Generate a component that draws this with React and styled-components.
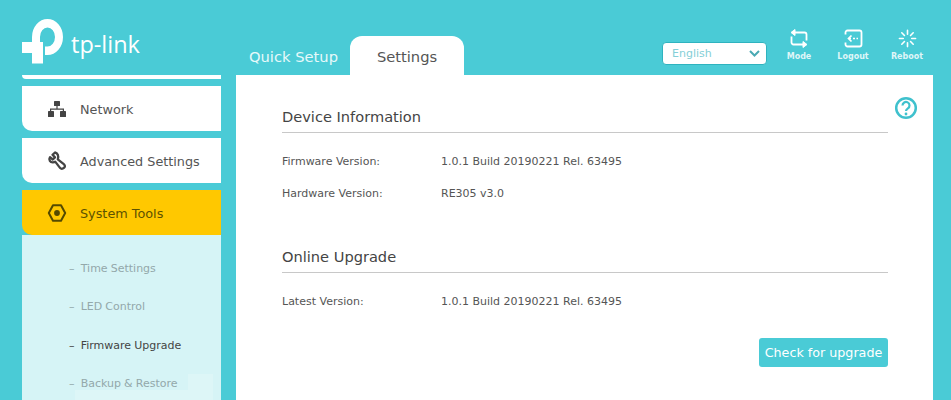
import React from "react";
import styled, { createGlobalStyle } from "styled-components";

const GlobalStyle = createGlobalStyle`
  html, body {
    margin: 0;
    padding: 0;
    height: 400px;
    overflow: hidden;
    background: #4acbd6;
    font-family: "DejaVu Sans", Verdana, sans-serif;
  }
`;

const Page = styled.div`
  width: 951px;
  height: 400px;
  overflow: hidden;
  background: #4acbd6;
`;

const Header = styled.header`
  height: 75px;
  display: flex;
  align-items: flex-end;
  padding-left: 22px;
  box-sizing: border-box;
`;

const Logo = styled.div`
  width: 214px;
  flex: none;
  height: 75px;
  display: flex;
  align-items: flex-start;
  padding-top: 19px;
  box-sizing: border-box;
  svg {
    flex: none;
  }
`;

const LogoText = styled.span`
  font-family: "Open Sans", sans-serif;
  font-size: 23.5px;
  font-weight: 400;
  line-height: 30px;
  margin: 10px 0 0 8px;
  color: #fff;
`;

const Tabs = styled.nav`
  display: flex;
  flex: none;
  align-items: flex-end;
  height: 39px;
  width: 401px;
  padding-left: 13px;
  box-sizing: border-box;
`;

const Tab = styled.div`
  height: 39px;
  box-sizing: border-box;
  font-size: 14.7px;
  line-height: 41px;
  width: ${(p) => p.$width}px;
  text-align: ${(p) => (p.$active ? "center" : "left")};
  color: ${(p) => (p.$active ? "#555" : "#e6f9fa")};
  background: ${(p) => (p.$active ? "#fff" : "transparent")};
  border-radius: 12px 12px 0 0;
`;

const Tools = styled.div`
  display: flex;
  flex: none;
  height: 75px;
  align-items: flex-start;
  padding-left: 135px;
  position: relative;
`;

const LangSelect = styled.div`
  position: absolute;
  left: 25px;
  top: 42px;
  width: 105px;
  height: 23px;
  box-sizing: border-box;
  background: #fff;
  border: 1px solid #2fb3bf;
  border-radius: 4px;
  display: flex;
  align-items: center;
  justify-content: space-between;
  padding: 0 6px 0 9px;
  font-size: 11px;
  color: #84cfd7;
`;

const ToolButton = styled.div`
  width: 54px;
  margin-top: 29px;
  display: flex;
  flex-direction: column;
  align-items: center;
  gap: 3px;
  color: #dff6f8;
  font-size: 8px;
  font-weight: bold;
  line-height: 11px;
`;

const Main = styled.div`
  display: flex;
  align-items: flex-start;
  padding-left: 22px;
`;

const Sidebar = styled.aside`
  width: 199px;
  flex: none;
  margin-right: 15px;
`;

const MenuStub = styled.div`
  height: 4px;
  background: #fff;
  border-bottom-left-radius: 8px;
  margin-bottom: 7px;
`;

const MenuItem = styled.div`
  height: 45px;
  display: flex;
  align-items: center;
  gap: 13px;
  padding: 1px 0 0 25px;
  box-sizing: border-box;
  margin-bottom: ${(p) => (p.$active ? 0 : "7px")};
  font-size: 12.8px;
  background: ${(p) => (p.$active ? "#ffc800" : "#fff")};
  color: ${(p) => (p.$active ? "#5e5200" : "#555")};
  border-bottom-left-radius: 10px;
  svg {
    flex: none;
  }
`;

const SubMenu = styled.div`
  position: relative;
  height: 165px;
  overflow: hidden;
  background: #d6f4f6;
  padding-top: 15px;
  box-sizing: border-box;
`;

const SubItem = styled.div`
  height: 38.3px;
  line-height: 38px;
  padding-left: 47px;
  font-size: 11px;
  word-spacing: -0.4px;
  color: ${(p) => (p.$active ? "#444" : "#93a8aa")};
`;

const Watermark = styled.svg`
  position: absolute;
  left: 53px;
  bottom: 0;
`;

const Content = styled.main`
  width: 697px;
  height: 325px;
  background: #fff;
  padding: 28px 45px 0 46px;
  box-sizing: border-box;
  position: relative;
`;

const HelpIcon = styled.svg`
  position: absolute;
  right: 15px;
  top: 21px;
`;

const SectionTitle = styled.h2`
  margin: 0;
  height: 29px;
  border-bottom: 1px solid #c8c8c8;
  font-size: 14.6px;
  font-weight: normal;
  line-height: 27px;
  color: #444;
`;

const Section = styled.section`
  margin-bottom: ${(p) => p.$gap}px;
`;

const Row = styled.div`
  display: flex;
  height: 32px;
  align-items: center;
  font-size: 11px;
  color: #555;
  h2 + & {
    margin-top: 12px;
  }
`;

const Label = styled.span`
  width: 159px;
`;

const Actions = styled.div`
  display: flex;
  justify-content: flex-end;
`;

const UpgradeButton = styled.button`
  width: 129px;
  height: 29px;
  border: 0;
  padding: 0;
  border-radius: 3px;
  background: #4acbd6;
  color: #fff;
  font-family: inherit;
  font-size: 12.7px;
`;

const NetworkIcon = () => (
  <svg width="20" height="18" viewBox="0 0 20 18" fill="#444">
    <rect x="7" y="1" width="6" height="5" rx="0.6" />
    <rect x="1" y="11" width="6" height="6" rx="0.6" />
    <rect x="13" y="11" width="6" height="6" rx="0.6" />
    <path d="M9.4 6h1.2v2.6H17V11h-1.2V9.8H4.2V11H3V8.6h6.4z" />
  </svg>
);

const WrenchIcon = () => (
  <svg width="20" height="20" viewBox="0 0 20 20" fill="none" stroke="#444" strokeWidth="2.300" strokeLinejoin="round">
    <path d="M8 1.500 5.500 3.800 8 6.400 5.800 8.500 3 6.200C1.400 8.800 3.200 11.500 6 11.300c1 0 1.700-.3 2.200-.7l5 6.500c1.500 1.700 5.200-.2 4.600-2.500-.2-.6-.5-1-1-1.400L10.800 8.300C12 5 10.500 1.800 8 1.500z" />
  </svg>
);

const GearIcon = () => (
  <svg width="20" height="20" viewBox="0 0 20 20" fill="none" stroke="#554a00">
    <path d="M6 2.200h8l4.200 7.800-4.200 7.800H6L1.800 10z" strokeWidth="2" strokeLinejoin="round" />
    <circle cx="10" cy="10" r="2.900" fill="#554a00" stroke="none" />
  </svg>
);

const TpLogo = () => (
  <svg width="41" height="45" viewBox="0 0 41 45" fill="#fff">
    <path d="M10 24V18A15.500 18 0 1 1 25.500 36H23V27.500h2.500A7.500 9.500 0 1 0 18 18v6z" />
    <path d="M0 23h21v21.500H10V34H0z" />
  </svg>
);

const ChevronIcon = () => (
  <svg width="11" height="7" viewBox="0 0 11 7" fill="none" stroke="#4aa9b3" strokeWidth="2">
    <path d="M1 1l4.500 4.500L10 1" />
  </svg>
);

const ModeIcon = () => (
  <svg width="20" height="19" viewBox="0 0 20 19" fill="none" stroke="#fff" strokeWidth="1.800">
    <path d="M4 3.500h11.500a2 2 0 0 1 2 2V11.500M16 15.500H4.500a2 2 0 0 1-2-2V7.500" />
    <path d="M6 .5 2 3.500 6 6.500zM14 12.500l4 3-4 3z" fill="#fff" strokeWidth="1" />
  </svg>
);

const LogoutIcon = () => (
  <svg width="19" height="19" viewBox="0 0 19 19" fill="none" stroke="#fff" strokeWidth="1.800">
    <path d="M1.500 5.500V3.500a2 2 0 0 1 2-2h12a2 2 0 0 1 2 2v12a2 2 0 0 1-2 2h-12a2 2 0 0 1-2-2v-2" />
    <path d="M7.500 6.500 4.500 9.500l3 3" strokeWidth="1.700" />
    <path d="M5 9.500h2M9 9.500h2M12.500 9.500h1.500" strokeWidth="1.700" />
  </svg>
);

const RebootIcon = () => (
  <svg width="19" height="19" viewBox="0 0 20 20" fill="none" stroke="#fff" strokeWidth="1.700" strokeLinecap="round">
    <path d="M10 1.500v4M10 14.500v4M1.500 10h4M14.500 10h4M4 4l2.800 2.800M16 4l-2.800 2.800M4 16l2.800-2.800M16 16l-2.800-2.800" />
  </svg>
);

const HelpGlyph = () => (
  <HelpIcon width="24" height="24" viewBox="0 0 24 24" fill="none" stroke="#3fc1cd" strokeWidth="2.500">
    <circle cx="12" cy="12" r="9.800" />
    <path d="M8.500 9.500a3.500 3.500 0 1 1 5.400 2.900c-1.200.8-1.900 1.400-1.900 2.700" strokeWidth="2.200" />
    <circle cx="12" cy="18" r="1.400" fill="#3fc1cd" stroke="none" />
  </HelpIcon>
);

const subItems = [
  { label: "Time Settings" },
  { label: "LED Control" },
  { label: "Firmware Upgrade", active: true },
  { label: "Backup & Restore" },
];

const App = () => (
  <Page>
    <GlobalStyle />
    <Header>
      <Logo>
        <TpLogo />
        <LogoText>tp-link</LogoText>
      </Logo>
      <Tabs>
        <Tab $width={101}>Quick Setup</Tab>
        <Tab $width={114} $active>
          Settings
        </Tab>
      </Tabs>
      <Tools>
        <LangSelect>
          English
          <ChevronIcon />
        </LangSelect>
        <ToolButton>
          <ModeIcon />
          Mode
        </ToolButton>
        <ToolButton>
          <LogoutIcon />
          Logout
        </ToolButton>
        <ToolButton>
          <RebootIcon />
          Reboot
        </ToolButton>
      </Tools>
    </Header>
    <Main>
      <Sidebar>
        <MenuStub />
        <MenuItem>
          <NetworkIcon />
          Network
        </MenuItem>
        <MenuItem>
          <WrenchIcon />
          Advanced Settings
        </MenuItem>
        <MenuItem $active>
          <GearIcon />
          System Tools
        </MenuItem>
        <SubMenu>
          {subItems.map((item) => (
            <SubItem key={item.label} $active={item.active}>
              – &nbsp;{item.label}
            </SubItem>
          ))}
          <Watermark width="140" height="28" viewBox="0 0 140 28" fill="#fff" opacity="0.18">
            <rect x="0" y="18" width="128" height="10" />
            <rect x="113" y="2" width="25" height="26" />
          </Watermark>
        </SubMenu>
      </Sidebar>
      <Content>
        <HelpGlyph />
        <Section $gap={34}>
          <SectionTitle>Device Information</SectionTitle>
          <Row>
            <Label>Firmware Version:</Label>
            1.0.1 Build 20190221 Rel. 63495
          </Row>
          <Row>
            <Label>Hardware Version:</Label>
            RE305 v3.0
          </Row>
        </Section>
        <Section $gap={21}>
          <SectionTitle>Online Upgrade</SectionTitle>
          <Row>
            <Label>Latest Version:</Label>
            1.0.1 Build 20190221 Rel. 63495
          </Row>
        </Section>
        <Actions>
          <UpgradeButton>Check for upgrade</UpgradeButton>
        </Actions>
      </Content>
    </Main>
  </Page>
);

export default App;
